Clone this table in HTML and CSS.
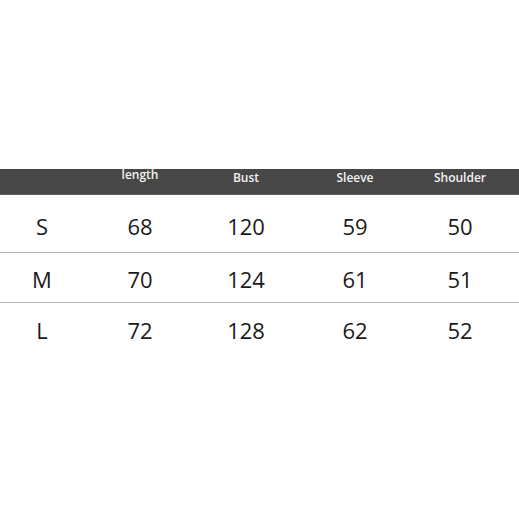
FILE: index.html
```html
<!DOCTYPE html>
<html>
<head>
<meta charset="utf-8">
<link rel="stylesheet" href="styles.css">
</head>
<body>
<div class="page">
  <div class="table">
    <div class="row head">
      <div class="cell"></div>
      <div class="cell up">length</div>
      <div class="cell">Bust</div>
      <div class="cell">Sleeve</div>
      <div class="cell">Shoulder</div>
      <div class="cell"></div>
    </div>
    <div class="row data r1">
      <div class="cell">S</div>
      <div class="cell">68</div>
      <div class="cell">120</div>
      <div class="cell">59</div>
      <div class="cell">50</div>
      <div class="cell"></div>
    </div>
    <div class="row data r2">
      <div class="cell">M</div>
      <div class="cell">70</div>
      <div class="cell">124</div>
      <div class="cell">61</div>
      <div class="cell">51</div>
      <div class="cell"></div>
    </div>
    <div class="row data r3">
      <div class="cell">L</div>
      <div class="cell">72</div>
      <div class="cell">128</div>
      <div class="cell">62</div>
      <div class="cell">52</div>
      <div class="cell"></div>
    </div>
  </div>
</div>
</body>
</html>
```
FILE: styles.css
```css
html, body {
  margin: 0;
  padding: 0;
  background: #ffffff;
}
.page {
  width: 519px;
  height: 519px;
  padding-top: 169px;
  box-sizing: border-box;
  font-family: "Open Sans", "Noto Sans", sans-serif;
}
.row {
  display: grid;
  grid-template-columns: 84px 112px 100px 118px 92px 1fr;
  align-items: center;
  text-align: center;
}
.head {
  background: #474747;
  height: 26px;
  border-bottom: 1px solid #5e5e5e;
  box-sizing: border-box;
  color: #f2f2f2;
  font-size: 12px;
  font-weight: 600;
  align-items: start;
  padding-top: 1px;
  line-height: 16px;
}
.head .up {
  margin-top: -3px;
}
.data {
  color: #1a1a1a;
  font-size: 22px;
  line-height: 30px;
  box-sizing: border-box;
}
.r1 {
  height: 58px;
  padding-top: 4px;
  border-bottom: 1px solid #b4b4b4;
}
.r2 {
  height: 50px;
  padding-top: 3px;
  border-bottom: 1px solid #b4b4b4;
}
.r3 {
  height: 51px;
  padding-top: 3px;
}
```
